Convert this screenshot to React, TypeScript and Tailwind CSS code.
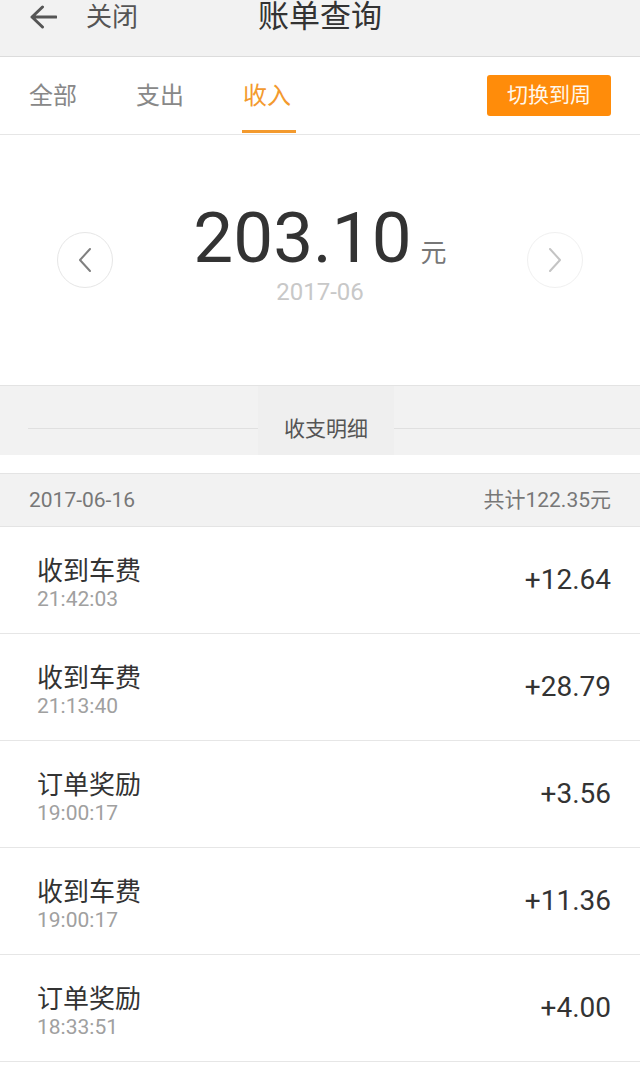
const FONT = 'font-["Roboto","Noto_Sans_CJK_SC",sans-serif]';

interface Entry {
  title: string;
  time: string;
  amount: string;
}

const entries: Entry[] = [
  { title: "收到车费", time: "21:42:03", amount: "+12.64" },
  { title: "收到车费", time: "21:13:40", amount: "+28.79" },
  { title: "订单奖励", time: "19:00:17", amount: "+3.56" },
  { title: "收到车费", time: "19:00:17", amount: "+11.36" },
  { title: "订单奖励", time: "18:33:51", amount: "+4.00" },
];

function BackArrow() {
  return (
    <svg width="28" height="24" viewBox="0 0 28 24" fill="none">
      <path
        d="M27 12H3M13.5 2L3 12l10.5 10"
        stroke="#555"
        strokeWidth="3"
        strokeLinecap="round"
        strokeLinejoin="round"
      />
    </svg>
  );
}

function Chevron({ dir, color }: { dir: "left" | "right"; color: string }) {
  return (
    <svg width="12" height="24" viewBox="0 0 12 24" fill="none">
      <path
        d={dir === "left" ? "M11 1L1 12l10 11" : "M1 1l10 11L1 23"}
        stroke={color}
        strokeWidth="2"
        strokeLinecap="round"
        strokeLinejoin="round"
      />
    </svg>
  );
}

function Header() {
  return (
    <div className="h-[57px] bg-[#f2f2f2] border-b border-[#dcdcdc]">
      <div className="grid h-[34px] grid-cols-[1fr_auto_1fr] items-center">
        <div className="flex items-center pl-[29px]">
          <BackArrow />
          <span className="ml-[29px] text-[26px] leading-[34px] text-[#555]">关闭</span>
        </div>
        <div className="text-[31px] leading-[34px] text-[#333]">账单查询</div>
        <div />
      </div>
    </div>
  );
}

function Tabs() {
  const tabs = ["全部", "支出", "收入"];
  return (
    <div className="flex h-[78px] items-center justify-between border-b border-[#e6e6e6] bg-white pl-[29px] pr-[29px]">
      <div className="flex h-full gap-[59px]">
        {tabs.map((t, i) => (
          <div key={t} className="relative flex h-full items-center">
            <span
              className={`text-[24px] leading-[24px] ${i === 2 ? "text-[#f39a2e]" : "text-[#888]"}`}
            >
              {t}
            </span>
            {i === 2 && (
              <div className="absolute bottom-[1px] left-[-1px] h-[3px] w-[54px] bg-[#f39a2e]" />
            )}
          </div>
        ))}
      </div>
      <button className="h-[41px] w-[124px] rounded-[3px] bg-[#ff8c0a] text-[21px] leading-[41px] text-[#fff8ec]">
        切换到周
      </button>
    </div>
  );
}

function Summary() {
  return (
    <div className="flex h-[251px] items-start justify-between border-b border-[#e3e3e3] bg-white px-[57px]">
      <div className="mt-[97px] flex h-[56px] w-[56px] items-center justify-center rounded-full border border-[#e6e6e6]">
        <Chevron dir="left" color="#808080" />
      </div>
      <div className="flex flex-col items-center pt-[67px]">
        <div className="flex items-baseline">
          <span className="text-[71px] leading-[71px] text-[#333]">203.10</span>
          <span className="ml-[9px] text-[26px] leading-[26px] text-[#777]">元</span>
        </div>
        <span className="mt-[7px] text-[24px] leading-[24px] text-[#c8c8c8]">2017-06</span>
      </div>
      <div className="mt-[97px] flex h-[56px] w-[56px] items-center justify-center rounded-full border border-[#f0f0f0]">
        <Chevron dir="right" color="#c4c4c4" />
      </div>
    </div>
  );
}

function DetailDivider() {
  return (
    <div className="flex h-[69px] bg-[#f2f2f2] pl-[28px]">
      <div className="flex flex-1 items-center pt-[16px]">
        <div className="h-px w-full bg-[#e0e0e0]" />
      </div>
      <div className="flex w-[136px] items-center justify-center bg-[#efefef] pt-[16px]">
        <span className="text-[21px] leading-[24px] text-[#555]">收支明细</span>
      </div>
      <div className="flex w-[246px] items-center pt-[16px]">
        <div className="h-px w-full bg-[#e0e0e0]" />
      </div>
    </div>
  );
}

function DateHeader() {
  return (
    <div className="mt-[18px] flex h-[54px] items-center justify-between border-y border-[#e4e4e4] bg-[#f2f2f2] pl-[29px] pr-[29px] text-[21px] leading-[24px] text-[#777]">
      <span>2017-06-16</span>
      <span>共计122.35元</span>
    </div>
  );
}

function Row({ entry }: { entry: Entry }) {
  return (
    <div className="flex h-[107px] items-center justify-between border-b border-[#e6e6e6] bg-white pl-[37px] pr-[29px]">
      <div className="flex flex-col self-start pt-[30px]">
        <span className="text-[26px] leading-[28px] text-[#333]">{entry.title}</span>
        <span className="mt-[3px] text-[21px] leading-[22px] text-[#a0a0a0]">{entry.time}</span>
      </div>
      <span className="text-[28px] leading-[28px] text-[#333]">{entry.amount}</span>
    </div>
  );
}

export default function App() {
  return (
    <div className={`${FONT} min-h-[1068px] w-[640px] bg-white`}>
      <Header />
      <Tabs />
      <Summary />
      <DetailDivider />
      <DateHeader />
      {entries.map((e, i) => (
        <Row key={i} entry={e} />
      ))}
    </div>
  );
}
